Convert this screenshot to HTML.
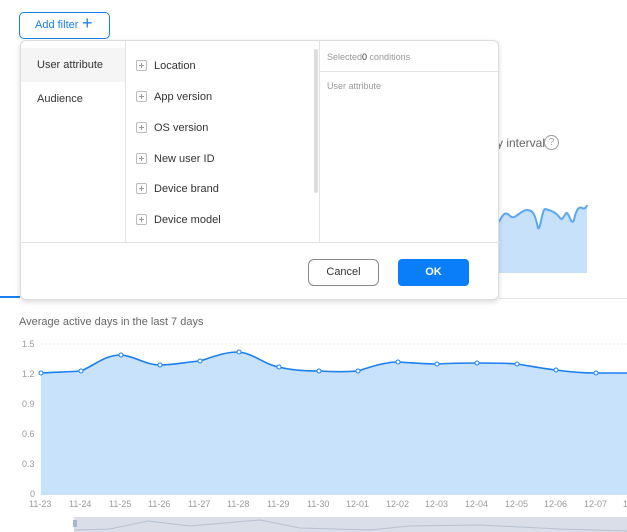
<!DOCTYPE html>
<html><head><meta charset="utf-8"><style>
*{margin:0;padding:0;box-sizing:border-box}
body{width:627px;height:532px;background:#fff;font-family:"Liberation Sans",sans-serif;position:relative;overflow:hidden;color:#333}
.abs{position:absolute}
.btn-add{left:19px;top:12px;width:91px;height:27px;border:1px solid #1a7ff0;border-radius:5px;color:#1a7ff0;font-size:11px;line-height:25px;padding-left:15px}
.pop{left:20px;top:40px;width:479px;height:260px;border:1px solid #ddd;border-radius:6px;background:#fff;box-shadow:0 2px 6px rgba(0,0,0,.15)}
.item{font-size:11px;color:#333;position:absolute}
.cb{position:absolute;width:11px;height:11px;border:1px solid #bbb;border-radius:2px}
.cb:before{content:"";position:absolute;left:2px;top:4px;width:5px;height:1px;background:#999}
.cb:after{content:"";position:absolute;left:4px;top:2px;width:1px;height:5px;background:#999}
.ax{font-size:9px;color:#999;position:absolute}
</style></head><body>
<div class="abs btn-add">Add filter <span style="font-size:18px;position:absolute;left:62px;top:-2px;font-weight:300">+</span></div>

<div class="abs" style="left:0;top:296px;width:20px;height:2px;background:#1a7ff0"></div>
<div class="abs" style="left:499px;top:298px;width:128px;height:1px;background:#e5e5e5"></div>
<div class="abs" style="left:497px;top:136px;font-size:12px;color:#666">y interval</div>
<div class="abs" style="left:544px;top:135px;width:15px;height:15px;border:1px solid #999;border-radius:50%;font-size:10px;color:#999;text-align:center;line-height:13px">?</div>
<svg class="abs" style="left:0;top:0" width="627" height="532">
<path d="M499 222 C502 216 505 210 510 216 C515 221 520 210 527 210 C533 210 535 214 538 228 C540 232 542 210 545 209 C550 210 556 212 560 218 C563 222 565 212 567 213 C570 215 571 226 574 220 C576 210 579 206 582 208 C585 210 587 206 587 205 L587 273 L499 273Z" fill="#c8e1fb"/>
<path d="M499 222 C502 216 505 210 510 216 C515 221 520 210 527 210 C533 210 535 214 538 228 C540 232 542 210 545 209 C550 210 556 212 560 218 C563 222 565 212 567 213 C570 215 571 226 574 220 C576 210 579 206 582 208 C585 210 587 206 587 205" fill="none" stroke="#5aa7f5" stroke-width="2"/>
<g stroke="#eee" stroke-dasharray="2,2">
<line x1="41" y1="344" x2="627" y2="344"/><line x1="41" y1="374" x2="627" y2="374"/><line x1="41" y1="405" x2="627" y2="405"/><line x1="41" y1="434" x2="627" y2="434"/><line x1="41" y1="464" x2="627" y2="464"/>
</g>
<path d="M41 373 C55 372 70 372 81 371 C95 365 105 355 121 355 C135 356 145 365 160 365 C175 365 185 362 200 361 C215 356 225 352 239 352 C255 354 265 365 279 367 C290 370 305 371 319 371 C335 372 345 372 358 371 C370 367 385 362 398 362 C415 363 425 364 437 364 C455 363 465 363 477 363 C495 363 505 363 517 364 C530 366 545 369 556 370 C570 372 585 373 596 373 L627 373 L627 495 L41 495Z" fill="#c8e2fc"/>
<path d="M41 373 C55 372 70 372 81 371 C95 365 105 355 121 355 C135 356 145 365 160 365 C175 365 185 362 200 361 C215 356 225 352 239 352 C255 354 265 365 279 367 C290 370 305 371 319 371 C335 372 345 372 358 371 C370 367 385 362 398 362 C415 363 425 364 437 364 C455 363 465 363 477 363 C495 363 505 363 517 364 C530 366 545 369 556 370 C570 372 585 373 596 373 L627 373" fill="none" stroke="#1a7ff0" stroke-width="1.6"/>
<g fill="#fff" stroke="#1a7ff0" stroke-width="1">
<circle cx="41" cy="373" r="2"/><circle cx="81" cy="371" r="2"/><circle cx="121" cy="355" r="2"/><circle cx="160" cy="365" r="2"/><circle cx="200" cy="361" r="2"/><circle cx="239" cy="352" r="2"/><circle cx="279" cy="367" r="2"/><circle cx="319" cy="371" r="2"/><circle cx="358" cy="371" r="2"/><circle cx="398" cy="362" r="2"/><circle cx="437" cy="364" r="2"/><circle cx="477" cy="363" r="2"/><circle cx="517" cy="364" r="2"/><circle cx="556" cy="370" r="2"/><circle cx="596" cy="373" r="2"/>
</g>
<rect x="74" y="517" width="553" height="15" fill="#d9dee8"/>
<path d="M74 530 L110 529 L148 521 L190 526 L260 520 L300 528 L370 530 L410 526 L480 525 L560 529 L627 531" fill="none" stroke="#b8c1d1" stroke-width="1"/>
<rect x="73" y="520" width="4" height="7" fill="#a8b6cc"/>
</svg>
<div class="abs" style="left:19px;top:316px;font-size:11px;color:#666">Average active days in the last 7 days</div>
<div class="ax" style="left:22px;top:339px">1.5</div>
<div class="ax" style="left:22px;top:369px">1.2</div>
<div class="ax" style="left:22px;top:399px">0.9</div>
<div class="ax" style="left:22px;top:429px">0.6</div>
<div class="ax" style="left:22px;top:459px">0.3</div>
<div class="ax" style="left:30px;top:489px">0</div>
<div class="abs" style="top:499px;left:0;width:700px;height:12px">
<span class="ax" style="left:29px">11-23</span><span class="ax" style="left:69px">11-24</span><span class="ax" style="left:109px">11-25</span><span class="ax" style="left:148px">11-26</span><span class="ax" style="left:188px">11-27</span><span class="ax" style="left:227px">11-28</span><span class="ax" style="left:267px">11-29</span><span class="ax" style="left:307px">11-30</span><span class="ax" style="left:346px">12-01</span><span class="ax" style="left:386px">12-02</span><span class="ax" style="left:425px">12-03</span><span class="ax" style="left:465px">12-04</span><span class="ax" style="left:505px">12-05</span><span class="ax" style="left:544px">12-06</span><span class="ax" style="left:584px">12-07</span><span class="ax" style="left:623px">1</span>
</div>

<div class="abs pop">
<div class="abs" style="left:0;top:7px;width:104px;height:34px;background:#f5f5f5"></div>
<div class="item" style="left:16px;top:18px">User attribute</div>
<div class="item" style="left:16px;top:52px">Audience</div>
<div class="abs" style="left:104px;top:0;width:1px;height:201px;background:#e3e3e3"></div>
<div class="abs" style="left:298px;top:0;width:1px;height:201px;background:#e3e3e3"></div>
<div class="abs" style="left:293px;top:8px;width:4px;height:144px;background:#ddd;border-radius:2px"></div>
<div class="abs" style="left:0;top:201px;width:479px;height:1px;background:#e3e3e3"></div>
<div class="cb" style="left:115px;top:19px"></div><div class="item" style="left:133px;top:19px">Location</div>
<div class="cb" style="left:115px;top:50px"></div><div class="item" style="left:133px;top:50px">App version</div>
<div class="cb" style="left:115px;top:81px"></div><div class="item" style="left:133px;top:81px">OS version</div>
<div class="cb" style="left:115px;top:112px"></div><div class="item" style="left:133px;top:112px">New user ID</div>
<div class="cb" style="left:115px;top:142px"></div><div class="item" style="left:133px;top:142px">Device brand</div>
<div class="cb" style="left:115px;top:173px"></div><div class="item" style="left:133px;top:173px">Device model</div>
<div class="abs" style="left:306px;top:11px;font-size:9px;color:#999">Selected<span style="color:#333">0</span> conditions</div>
<div class="abs" style="left:299px;top:30px;width:180px;height:1px;background:#e3e3e3"></div>
<div class="abs" style="left:306px;top:40px;font-size:9px;color:#999">User attribute</div>
<div class="abs" style="left:287px;top:218px;width:71px;height:27px;border:1px solid #888;border-radius:6px;font-size:11px;text-align:center;line-height:25px">Cancel</div>
<div class="abs" style="left:377px;top:218px;width:71px;height:27px;background:#0a7ef8;border-radius:4px;color:#fff;font-size:11px;font-weight:bold;text-align:center;line-height:27px">OK</div>
</div>
</body></html>
